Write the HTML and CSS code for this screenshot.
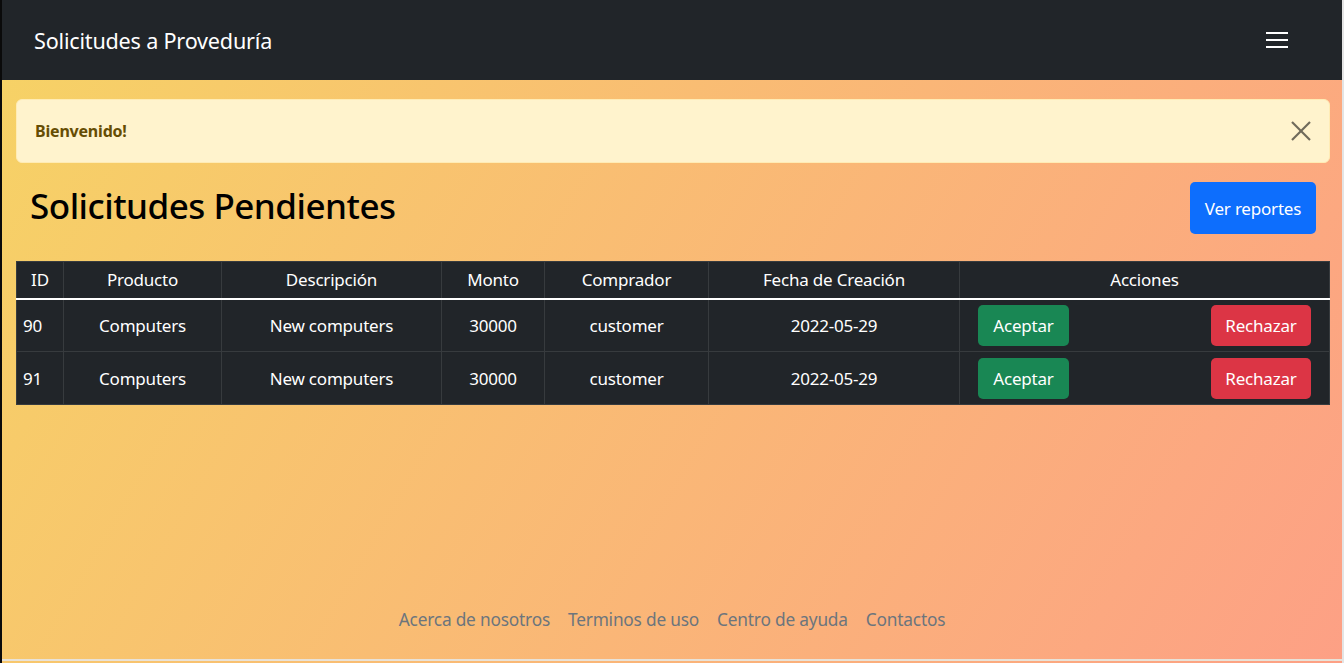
FILE: index.html
```html
<!DOCTYPE html>
<html lang="es">
<head>
<meta charset="utf-8">
<title>Solicitudes a Proveduría</title>
<link rel="stylesheet" href="styles.css">
</head>
<body>
<div class="page">
  <nav class="navbar">
    <span class="brand">Solicitudes a Proveduría</span>
    <button class="toggler" aria-label="menu">
      <svg width="22" height="18" viewBox="0 0 22 18"><g stroke="#fff" stroke-width="2"><line x1="0" y1="2" x2="22" y2="2"/><line x1="0" y1="9" x2="22" y2="9"/><line x1="0" y1="16" x2="22" y2="16"/></g></svg>
    </button>
  </nav>
  <main class="content">
    <div class="alert">
      <strong>Bienvenido!</strong>
      <button class="close" aria-label="cerrar">
        <svg width="20" height="20" viewBox="0 0 20 20"><g stroke="#6f6a5a" stroke-width="2.2"><line x1="1" y1="1" x2="19" y2="19"/><line x1="19" y1="1" x2="1" y2="19"/></g></svg>
      </button>
    </div>
    <div class="title-row">
      <h1>Solicitudes Pendientes</h1>
      <button class="btn btn-primary">Ver reportes</button>
    </div>
    <table class="table">
      <thead>
        <tr>
          <th class="c-id">ID</th>
          <th class="c-prod">Producto</th>
          <th class="c-desc">Descripción</th>
          <th class="c-monto">Monto</th>
          <th class="c-comp">Comprador</th>
          <th class="c-fecha">Fecha de Creación</th>
          <th>Acciones</th>
        </tr>
      </thead>
      <tbody>
        <tr>
          <td class="left">90</td>
          <td>Computers</td>
          <td>New computers</td>
          <td>30000</td>
          <td>customer</td>
          <td>2022-05-29</td>
          <td class="actions"><div class="act"><button class="btn btn-success">Aceptar</button><button class="btn btn-danger">Rechazar</button></div></td>
        </tr>
        <tr>
          <td class="left">91</td>
          <td>Computers</td>
          <td>New computers</td>
          <td>30000</td>
          <td>customer</td>
          <td>2022-05-29</td>
          <td class="actions"><div class="act"><button class="btn btn-success">Aceptar</button><button class="btn btn-danger">Rechazar</button></div></td>
        </tr>
      </tbody>
    </table>
  </main>
  <footer class="footer">
    <a href="#">Acerca de nosotros</a>
    <a href="#">Terminos de uso</a>
    <a href="#">Centro de ayuda</a>
    <a href="#">Contactos</a>
  </footer>
</div>
</body>
</html>
```

FILE: styles.css
```css
* { box-sizing: border-box; }
html, body { margin: 0; height: 100%; }
body {
  font-family: "Noto Sans", "Open Sans", sans-serif;
  color: #212529;
  background: linear-gradient(120deg, #f6d365 0%, #fda085 100%);
  border-left: 2px solid #0a0a0a;
  border-right: 2px solid #e4e4e4;
}
.page {
  min-height: 100%;
  display: flex;
  flex-direction: column;
}
.navbar {
  height: 80px;
  background: #212529;
  display: flex;
  align-items: center;
  justify-content: space-between;
  padding: 0 54px 0 32px;
}
.brand {
  color: #fff;
  font-size: 21.6px;
  letter-spacing: -0.2px;
}
.toggler {
  background: none;
  border: 0;
  padding: 0;
  display: flex;
}
.content {
  flex: 1;
  padding: 19px 12px 0 14px;
}
.alert {
  height: 64px;
  background: #fff3cd;
  border: 1px solid #ffecb5;
  border-radius: 6px;
  color: #664d03;
  display: flex;
  align-items: center;
  justify-content: space-between;
  padding: 0 18px 0 18px;
  font-size: 16px;
}
.alert strong { font-weight: 700; letter-spacing: -0.2px; }
.close {
  background: none;
  border: 0;
  padding: 0;
  display: flex;
}
.title-row {
  display: flex;
  justify-content: space-between;
  align-items: flex-start;
  padding: 19px 14px 0 14px;
  height: 98px;
}
h1 {
  margin: 0;
  font-size: 35px;
  font-weight: 500;
  color: #000;
  letter-spacing: -0.5px;
}
.btn {
  border: 0;
  border-radius: 5px;
  color: #fff;
  font-family: inherit;
  font-size: 17px;
  letter-spacing: -0.2px;
  cursor: pointer;
}
.btn-primary {
  background: #0d6efd;
  height: 52px;
  width: 126px;
}
.btn-success { background: #198754; height: 41px; width: 91px; }
.btn-danger { background: #dc3545; height: 41px; width: 100px; }
.table {
  width: 100%;
  border-collapse: collapse;
  background: #212529;
  color: #fff;
  font-size: 17px;
  letter-spacing: -0.2px;
  border: 1px solid #373b3e;
}
.table th, .table td {
  border-left: 1px solid #373b3e;
  border-right: 1px solid #373b3e;
  text-align: center;
  font-weight: 400;
}
.table th {
  height: 37px;
  padding: 0 6px;
  border-bottom: 2px solid #fff;
}
.table td {
  height: 53px;
  padding: 0 6px;
  border-bottom: 1px solid #373b3e;
}
.table td.left { text-align: left; }
.c-id { width: 47px; }
.c-prod { width: 158px; }
.c-desc { width: 220px; }
.c-monto { width: 103px; }
.c-comp { width: 164px; }
.c-fecha { width: 251px; }
.table td.actions { padding: 0 18px; }
.act {
  display: flex;
  justify-content: space-between;
}
.footer {
  display: flex;
  justify-content: center;
  gap: 18px;
  padding: 0 0 28px;
  border-bottom: 2px solid #e8e2d8;
  margin-bottom: 2px;
}
.footer a {
  color: #6c757d;
  text-decoration: none;
  font-size: 17.3px;
  letter-spacing: -0.2px;
}
```
